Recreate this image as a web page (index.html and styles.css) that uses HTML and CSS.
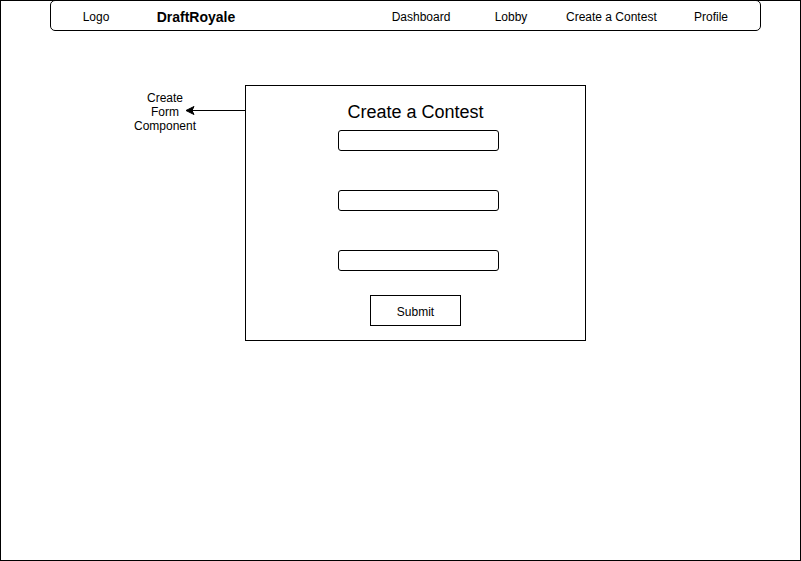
FILE: index.html
```html
<!DOCTYPE html>
<html>
<head>
<meta charset="utf-8">
<link rel="stylesheet" href="styles.css">
</head>
<body>
<div class="frame">
  <nav class="nav">
    <span class="nav-item">Logo</span>
    <span class="nav-item brand gap10">DraftRoyale</span>
    <span class="nav-item push">Dashboard</span>
    <span class="nav-item">Lobby</span>
    <span class="nav-item gap10">Create a Contest</span>
    <span class="nav-item gap10">Profile</span>
  </nav>
  <div class="row">
    <div class="note">
      <span>Create</span>
      <span>Form</span>
      <span>Component</span>
    </div>
    <svg class="arrow" width="59" height="10" viewBox="0 0 59 10">
      <line x1="6" y1="5.5" x2="59" y2="5.5" stroke="#000" stroke-width="1"/>
      <polygon points="0,5.5 8,1.5 6,5.5 8,9.5" fill="#000" stroke="#000" stroke-width="1" stroke-linejoin="miter"/>
    </svg>
    <form class="card">
      <div class="title">Create a Contest</div>
      <div class="field first"></div>
      <div class="field"></div>
      <div class="field"></div>
      <div class="submit">Submit</div>
    </form>
  </div>
</div>
</body>
</html>
```
FILE: styles.css
```css
* { box-sizing: border-box; }
html, body { margin: 0; padding: 0; background: #fff; }
body { font-family: "Liberation Sans", Arial, sans-serif; color: #000; }
.frame {
  width: 801px;
  height: 561px;
  border: 1px solid #000;
}
.nav {
  display: flex;
  align-items: center;
  width: 711px;
  height: 31px;
  margin: -1px 0 0 49px;
  padding-top: 2px;
  border: 1px solid #000;
  border-radius: 5px;
  font-size: 12px;
}
.nav-item {
  width: 90px;
  text-align: center;
  line-height: 14px;
  white-space: nowrap;
}
.brand { font-weight: bold; font-size: 14px; }
.gap10 { margin-left: 10px; }
.push { margin-left: 135px; }
.row {
  display: flex;
  align-items: flex-start;
  margin-top: 54px;
  padding-left: 134px;
}
.note {
  width: 60px;
  margin-top: 6px;
  display: flex;
  flex-direction: column;
  align-items: center;
  font-size: 12px;
  line-height: 14px;
  white-space: nowrap;
}
.arrow {
  display: block;
  margin-left: -9px;
  margin-top: 20px;
  flex: none;
}
.card {
  margin: 0;
  width: 341px;
  height: 256px;
  border: 1px solid #000;
  display: flex;
  flex-direction: column;
  align-items: center;
  padding-top: 15px;
}
.title {
  font-size: 18px;
  line-height: 22px;
}
.field {
  width: 161px;
  height: 21px;
  border: 1px solid #000;
  border-radius: 3px;
  margin-left: 6px;
  margin-top: 39px;
}
.field.first { margin-top: 7px; }
.submit {
  width: 91px;
  height: 31px;
  border: 1px solid #000;
  margin-top: 24px;
  padding-top: 2px;
  font-size: 12px;
  display: flex;
  align-items: center;
  justify-content: center;
}
```
